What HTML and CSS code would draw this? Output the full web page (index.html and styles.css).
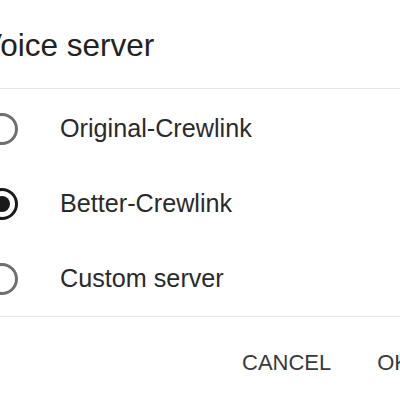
FILE: index.html
```html
<!DOCTYPE html>
<html>
<head>
<meta charset="utf-8">
<link rel="stylesheet" href="styles.css">
</head>
<body>
<div class="dialog">
  <h1 class="title">Voice server</h1>
  <div class="list">
    <div class="option">
      <span class="radio"></span>
      <span class="label">Original-Crewlink</span>
    </div>
    <div class="option">
      <span class="radio checked"></span>
      <span class="label">Better-Crewlink</span>
    </div>
    <div class="option">
      <span class="radio"></span>
      <span class="label">Custom server</span>
    </div>
  </div>
  <div class="actions">
    <span class="btn">CANCEL</span>
    <span class="btn">OK</span>
  </div>
</div>
</body>
</html>
```

FILE: styles.css
```css
html, body {
  margin: 0;
  padding: 0;
  background: #fff;
  overflow: hidden;
}
.dialog {
  width: 400px;
  font-family: "Liberation Sans", Arial, sans-serif;
}
.title {
  margin: 0;
  padding: 27px 0 0 0;
  margin-left: -19px;
  height: 88px;
  box-sizing: border-box;
  font-size: 31.5px;
  line-height: 36px;
  font-weight: normal;
  color: #222;
  white-space: nowrap;
}
.list {
  border-top: 1px solid #e6e6e6;
  border-bottom: 1px solid #e6e6e6;
  padding-top: 2px;
}
.option {
  height: 75px;
  display: flex;
  align-items: center;
  margin-left: -14px;
}
.radio {
  width: 32px;
  height: 32px;
  box-sizing: border-box;
  border: 3px solid #707070;
  border-radius: 50%;
  display: flex;
  align-items: center;
  justify-content: center;
  flex: none;
}
.radio.checked {
  border-color: #1a1a1a;
}
.radio.checked::after {
  content: "";
  width: 16px;
  height: 16px;
  border-radius: 50%;
  background: #1a1a1a;
}
.label {
  margin-left: 42px;
  font-size: 25.2px;
  line-height: 29px;
  color: #2a2a2a;
}
.actions {
  display: flex;
  align-items: center;
  height: 92px;
  padding-left: 242px;
  gap: 46px;
}
.btn {
  font-size: 22px;
  line-height: 26px;
  color: #3a3a3a;
  white-space: nowrap;
}
```
